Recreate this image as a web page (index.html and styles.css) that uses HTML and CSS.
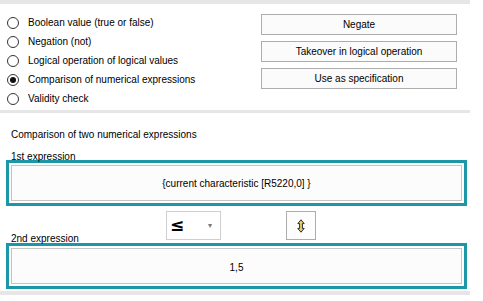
FILE: index.html
```html
<!DOCTYPE html>
<html>
<head>
<meta charset="utf-8">
<link rel="stylesheet" href="styles.css">
</head>
<body>
<div class="page">
  <div class="band band-top"></div>
  <div class="top">
    <div class="radios">
      <div class="radio"><span class="circle"></span><span>Boolean value (true or false)</span></div>
      <div class="radio"><span class="circle"></span><span>Negation (not)</span></div>
      <div class="radio"><span class="circle"></span><span>Logical operation of logical values</span></div>
      <div class="radio"><span class="circle checked"></span><span>Comparison of numerical expressions</span></div>
      <div class="radio"><span class="circle"></span><span>Validity check</span></div>
    </div>
    <div class="buttons">
      <div class="btn">Negate</div>
      <div class="btn">Takeover in logical operation</div>
      <div class="btn">Use as specification</div>
    </div>
  </div>
  <div class="band band-mid"></div>
  <div class="lower">
    <div class="title">Comparison of two numerical expressions</div>
    <div class="label">1st expression</div>
    <div class="frame"><div class="field">{current characteristic [R5220,0] }</div></div>
    <div class="midrow">
      <div class="label label2">2nd expression</div>
      <div class="combo"><span class="op">≤</span><span class="arrow">▾</span></div>
      <div class="swap">
        <svg width="8" height="14" viewBox="0 0 8 14">
          <path d="M4 0.8 L7.2 4.6 L5.4 4.6 L5.4 9.4 L7.2 9.4 L4 13.2 L0.8 9.4 L2.6 9.4 L2.6 4.6 L0.8 4.6 Z" fill="#f2cf5a" stroke="#1f2a44" stroke-width="1" stroke-linejoin="round"/>
        </svg>
      </div>
    </div>
    <div class="frame frame2"><div class="field">1,5</div></div>
  </div>
  <div class="band band-bottom"></div>
</div>
</body>
</html>
```
FILE: styles.css
```css
html, body {
  margin: 0;
  padding: 0;
  background: #ffffff;
}
body {
  font-family: "Liberation Sans", Arial, sans-serif;
  font-size: 10px;
  color: #000;
}
.page {
  width: 483px;
  height: 301px;
  overflow: hidden;
}
.band {
  width: 470px;
  background: #e6e6e6;
}
.band-top { height: 4px; }
.band-mid { height: 3px; }
.band-bottom { height: 4px; margin-top: 2px; }

.top {
  display: flex;
  height: 106px;
}
.radios {
  padding-top: 9px;
  padding-left: 7px;
  width: 254px;
}
.radio {
  display: flex;
  align-items: center;
  height: 19px;
  gap: 9px;
}
.circle {
  width: 10px;
  height: 10px;
  border: 1px solid #333;
  border-radius: 50%;
  background: #fff;
  display: flex;
  align-items: center;
  justify-content: center;
  flex: none;
}
.circle.checked::after {
  content: "";
  width: 6px;
  height: 6px;
  border-radius: 50%;
  background: #111;
}
.buttons {
  padding-top: 10px;
  display: flex;
  flex-direction: column;
  gap: 6px;
}
.btn {
  width: 194px;
  height: 19px;
  border: 1px solid #adadad;
  background: #fbfbfb;
  display: flex;
  align-items: center;
  justify-content: center;
}
.lower {
  padding-top: 15px;
}
.title {
  padding-left: 11px;
  height: 14px;
  line-height: 14px;
}
.label {
  padding-left: 11px;
  line-height: 14px;
  height: 14px;
}
.title + .label {
  margin-top: 8px;
  margin-bottom: -4px;
}
.frame {
  margin-left: 6px;
  width: 451px;
  height: 36px;
  border: 3px solid #1b97a7;
  padding: 2px;
  box-sizing: content-box;
  background: #fff;
}
.frame .field {
  width: 100%;
  height: 100%;
  box-sizing: border-box;
  border: 1px solid #c4c4c4;
  background: #fcfcfc;
  display: flex;
  align-items: center;
  justify-content: center;
  padding-top: 1px;
}
.frame2 {
  margin-top: 3px;
}
.frame2 .field {
  padding-top: 3px;
}
.midrow {
  display: flex;
  align-items: stretch;
  height: 29px;
  margin-top: 5px;
}
.label2 {
  width: 155px;
  align-self: flex-end;
  margin-bottom: -6px;
  flex: none;
}
.combo {
  height: 27px;
  border: 1px solid #cfcfcf;
  background: #fff;
  display: flex;
  align-items: center;
  justify-content: space-between;
  padding: 0 8px 0 2px;
  box-sizing: content-box;
  flex: none;
  width: 43px;
}
.op {
  font-family: "DejaVu Sans", sans-serif;
  font-size: 17px;
  font-weight: bold;
  color: #000;
  line-height: 1;
  padding-left: 1px;
}
.arrow {
  font-size: 8px;
  color: #777;
}
.swap {
  margin-left: 65px;
  width: 28px;
  height: 27px;
  border: 1px solid #adadad;
  background: #fdfdfd;
  display: flex;
  align-items: center;
  justify-content: center;
  flex: none;
}
```
